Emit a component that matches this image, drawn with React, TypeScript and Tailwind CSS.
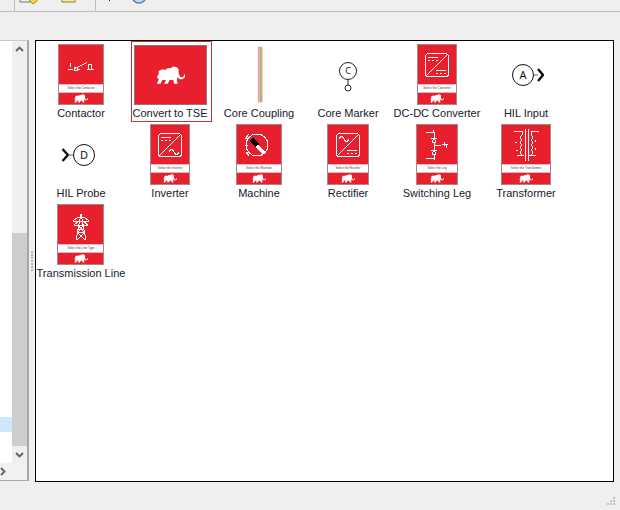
import type { ReactNode } from "react";

function Elephant({ w = 16, h = 10 }: { w?: number; h?: number }) {
  return (
    <svg width={w} height={h} viewBox="0 0 32 20" fill="white">
      <path d="M1 19 L3 14 L1 12 L3 8 L3 5 L7 3 L10 4 L13 2 L16 2 L19 0 L23 1 L25 3 L25 8 L27 12 L30 12 L31 9 L32 9 L32 12 L29 14 L26 14 L24 12 L23 15 L24 19 L20 19 L19 15 L15 15 L13 19 L9 19 L11 15 L7 15 L5 19 Z" />
    </svg>
  );
}

function Switch() {
  return (
    <svg width="46" height="40" viewBox="0 0 46 40" fill="none" stroke="white" strokeWidth="1" shapeRendering="crispEdges">
      <path d="M9 24.5H15M20 24.5H22M17 23.5L29 17.5M12 18v4" />
      <circle cx="17.5" cy="24.5" r="1.8" />
      <path d="M29 24.5H37M31 24V19H34V24" />
    </svg>
  );
}

function Converter({ top, bottom }: { top: "dc" | "ac"; bottom: "dc" | "ac" }) {
  const dc = (x: number, y: number) => (
    <path d={`M${x} ${y}h10M${x} ${y + 3}h2M${x + 4} ${y + 3}h2M${x + 8} ${y + 3}h2`} />
  );
  const ac = (x: number, y: number) => <path d={`M${x} ${y + 2}q2.5 -5 5 0t5 0`} />;
  return (
    <svg width="26" height="26" viewBox="0 0 26 26" fill="none" stroke="white" strokeWidth="1" shapeRendering="crispEdges">
      <rect x="1.5" y="1.5" width="23" height="23" rx="3" />
      <path d="M2 24L24 2" />
      {top === "dc" ? dc(4, 5) : ac(4, 5)}
      {bottom === "dc" ? dc(12, 18) : ac(12, 18)}
    </svg>
  );
}

function MachineIcon() {
  return (
    <svg width="40" height="32" viewBox="3 0 40 32" fill="none" stroke="white" strokeWidth="1" shapeRendering="crispEdges">
      <circle cx="21" cy="16" r="11" />
      <path d="M13 9H10l3-4M12 16H9M13 23H10l3 4" />
      <path d="M17 9L23 15L20 18L14 12Z" fill="black" stroke="black" />
      <path d="M22 16L29 23L27 25L20 18Z" fill="white" />
    </svg>
  );
}

function LegIcon() {
  return (
    <svg width="34" height="36" viewBox="0 0 34 36" fill="none" stroke="white" strokeWidth="1" shapeRendering="crispEdges">
      <path d="M6 5H14V11M14 15V23M14 27V31H6M13 5V3M14 31V33" />
      <path d="M11 11H17M12 15H16M14 11L12 15M14 11L16 15M11 23H17M12 27H16M14 23L12 27M14 23L16 27" />
      <path d="M15 18H21M24 15V19M22 17H28M26 17V21" />
    </svg>
  );
}

function TransformerIcon() {
  return (
    <svg width="48" height="38" viewBox="0 0 48 38" fill="none" stroke="white" strokeWidth="1" shapeRendering="crispEdges">
      <path d="M23 3V35M26 3V35" />
      <path d="M12 5H20V9q-3 3 0 5q-3 3 0 5q-3 3 0 5q-3 3 0 5H15" />
      <path d="M37 5H29V9q3 3 0 5q3 3 0 5q3 3 0 5q3 3 0 5H34" />
      <path d="M13 16h2M14 24h2M33 14v2M33 22v2" />
    </svg>
  );
}

function TowerIcon() {
  return (
    <svg width="18" height="27" viewBox="0 0 18 27" fill="none" stroke="white" strokeWidth="1" shapeRendering="crispEdges" className="mt-[5px]">
      <path d="M9 0L4 26M9 0L14 26M1 7H17M1 7L6 3H12L17 7M2 11H16M2 11L6 8M16 11L12 8M6 11L12 18H6L12 11M5 18L13 26M13 18L5 26" />
    </svg>
  );
}

function Card({ w, caption, children }: { w: number; caption: string; children: ReactNode }) {
  return (
    <div style={{ width: w }} className="h-[61px] shrink-0 bg-[#e81f2d] border border-[#a08a8c] flex flex-col">
      <div className="h-[39px] flex items-center justify-center overflow-hidden">{children}</div>
      <div className="h-[9px] bg-white border-y border-[#f0b8bc] flex items-center justify-center">
        <span className="text-[3px] leading-none text-[#444] whitespace-nowrap">{caption}</span>
      </div>
      <div className="flex-1 flex items-center justify-center">
        <Elephant w={14} h={9} />
      </div>
    </div>
  );
}

function Symbol({ children }: { children: ReactNode }) {
  return <div className="h-[61px] flex items-center justify-center">{children}</div>;
}

const items: { label: string; icon: ReactNode; selected?: boolean }[] = [
  {
    label: "Contactor",
    icon: (
      <Card w={46} caption="Select the Contactor">
        <Switch />
      </Card>
    ),
  },
  {
    label: "Convert to TSE",
    selected: true,
    icon: (
      <div className="w-[73px] h-[61px] bg-[#e81f2d] border border-[#8a7a7c] flex items-center justify-center">
        <Elephant w={29} h={19} />
      </div>
    ),
  },
  {
    label: "Core Coupling",
    icon: (
      <Symbol>
        <svg width="8" height="61" viewBox="0 0 8 61">
          <rect x="2" y="2" width="6" height="57" fill="#eeeeee" />
          <rect x="3" y="3" width="1.6" height="55" fill="#f29a9a" />
          <rect x="5" y="3" width="1" height="55" fill="#6fc36f" />
          <rect x="6.3" y="3" width="1" height="55" fill="#e58a5a" />
        </svg>
      </Symbol>
    ),
  },
  {
    label: "Core Marker",
    icon: (
      <Symbol>
        <svg width="20" height="34" viewBox="0 0 20 34" fill="none" stroke="#222" className="mt-[9px]">
          <circle cx="10" cy="9" r="8.5" />
          <path d="M10 17.5V23" />
          <circle cx="10" cy="26" r="3" />
          <text x="10" y="12" textAnchor="middle" fontSize="9" fill="#222" stroke="none" fontFamily="Noto Sans, sans-serif">
            C
          </text>
        </svg>
      </Symbol>
    ),
  },
  {
    label: "DC-DC Converter",
    icon: (
      <Card w={40} caption="Select the Converter">
        <Converter top="dc" bottom="dc" />
      </Card>
    ),
  },
  {
    label: "HIL Input",
    icon: (
      <Symbol>
        <svg width="36" height="24" viewBox="0 0 36 24" fill="none" stroke="#111">
          <circle cx="15" cy="12" r="10.5" />
          <path d="M26 12H30" stroke="#666" />
          <path d="M30 6L35 12L30 18" strokeWidth="2.4" />
          <text x="15" y="16" textAnchor="middle" fontSize="11" fill="#111" stroke="none" fontFamily="Noto Sans, sans-serif">
            A
          </text>
        </svg>
      </Symbol>
    ),
  },
  {
    label: "HIL Probe",
    icon: (
      <Symbol>
        <svg width="40" height="24" viewBox="0 0 40 24" fill="none" stroke="#111">
          <path d="M1.5 6L7 12L1.5 18" strokeWidth="2.4" />
          <path d="M7 12H12" stroke="#666" />
          <circle cx="23" cy="12" r="10.5" />
          <text x="23" y="16" textAnchor="middle" fontSize="11" fill="#111" stroke="none" fontFamily="Noto Sans, sans-serif">
            D
          </text>
        </svg>
      </Symbol>
    ),
  },
  {
    label: "Inverter",
    icon: (
      <Card w={40} caption="Select the Inverter">
        <Converter top="dc" bottom="ac" />
      </Card>
    ),
  },
  {
    label: "Machine",
    icon: (
      <Card w={46} caption="Select the Machine">
        <MachineIcon />
      </Card>
    ),
  },
  {
    label: "Rectifier",
    icon: (
      <Card w={42} caption="Select the Rectifier">
        <Converter top="ac" bottom="dc" />
      </Card>
    ),
  },
  {
    label: "Switching Leg",
    icon: (
      <Card w={42} caption="Select the Leg">
        <LegIcon />
      </Card>
    ),
  },
  {
    label: "Transformer",
    icon: (
      <Card w={50} caption="Select the Transformer">
        <TransformerIcon />
      </Card>
    ),
  },
  {
    label: "Transmission Line",
    icon: (
      <Card w={47} caption="Select the Line Type">
        <TowerIcon />
      </Card>
    ),
  },
];

function Toolbar() {
  return (
    <div className="h-[12px] shrink-0 border-b border-[#bdbdbd] flex overflow-hidden">
      <div className="w-[15px] border-r border-[#bdbdbd]" />
      <div className="w-[81px] border-r border-[#bdbdbd] relative">
        <svg width="80" height="11" viewBox="0 0 80 11" className="block">
          <rect x="5" y="-8" width="10" height="10" fill="#eeeeee" stroke="#777" />
          <path d="M15 -4H22V1L18 4L15 1Z" fill="#f5d24a" stroke="#b08a20" />
          <rect x="47" y="-8" width="13" height="10" fill="#fbe89a" stroke="#8a7a3a" />
        </svg>
      </div>
      <svg width="60" height="11" viewBox="0 0 60 11" className="block">
        <rect x="13" y="0" width="1" height="1" fill="#222" />
        <circle cx="43" cy="-4" r="7" fill="#c6d6ea" stroke="#5b7da8" strokeWidth="1.4" />
      </svg>
    </div>
  );
}

function LeftPanel() {
  return (
    <div className="w-[29px] h-[441px] shrink-0 bg-white border-t border-r-2 border-b border-t-[#c8c8c8] border-r-[#a3a6b4] border-b-[#a3a6b4] flex flex-col">
      <div className="flex-1 flex min-h-0">
        <div className="w-[12px] flex flex-col justify-end pb-[31px]">
          <div className="h-[15px] bg-[#cce8ff]" />
        </div>
        <div className="w-[15px] bg-[#efefef] flex flex-col items-center">
          <svg width="9" height="6" viewBox="0 0 9 6" className="mt-[5px] shrink-0" fill="none" stroke="#606060" strokeWidth="1.8">
            <path d="M1 5L4.5 1.5L8 5" />
          </svg>
          <div className="mt-[181px] w-full h-[213px] bg-[#cdcdcd]" />
          <svg width="9" height="6" viewBox="0 0 9 6" className="mt-[6px] shrink-0" fill="none" stroke="#606060" strokeWidth="1.8">
            <path d="M1 1L4.5 4.5L8 1" />
          </svg>
        </div>
      </div>
      <div className="h-[17px] shrink-0 bg-[#f1f1f1] flex items-center">
        <svg width="6" height="9" viewBox="0 0 6 9" fill="none" stroke="#606060" strokeWidth="1.8">
          <path d="M1 1L4.5 4.5L1 8" />
        </svg>
      </div>
    </div>
  );
}

function SplitterDots() {
  return (
    <div className="w-[6px] shrink-0 flex flex-col items-center justify-center gap-[1px] h-[441px]">
      {[0, 1, 2, 3, 4, 5, 6].map((i) => (
        <div key={i} className="w-[2px] h-[2px] bg-[#b5b5b5]" />
      ))}
    </div>
  );
}

function ComponentGrid() {
  return (
    <div className="w-[579px] h-[442px] bg-white border border-black pl-[0.5px]">
      <div className="grid grid-cols-[repeat(6,89px)] auto-rows-[80px]">
        {items.map((item) => (
          <div key={item.label} className="flex justify-center">
            <div
              className={
                item.selected
                  ? "w-[81px] h-[81px] ml-[2px] pr-[2px] border border-[#c8323c] flex flex-col items-center pt-[3px]"
                  : "flex flex-col items-center pt-[3px]"
              }
            >
              {item.icon}
              <div className="h-[16px] text-[11px] leading-[16px] text-[#16202c] whitespace-nowrap">{item.label}</div>
            </div>
          </div>
        ))}
      </div>
    </div>
  );
}

export default function App() {
  return (
    <div className="w-[620px] h-[510px] bg-[#efefef] flex flex-col overflow-hidden font-['Liberation_Sans',sans-serif]">
      <Toolbar />
      <div className="flex pt-[28px]">
        <LeftPanel />
        <SplitterDots />
        <ComponentGrid />
      </div>
      <div className="flex-1 flex justify-end items-end pr-[3px] pb-[3px]">
        <svg width="11" height="11" viewBox="0 0 11 11" fill="#c2c2c2">
          <rect x="7" y="1" width="2" height="2" />
          <rect x="4" y="4" width="2" height="2" />
          <rect x="7" y="4" width="2" height="2" />
          <rect x="1" y="7" width="2" height="2" />
          <rect x="4" y="7" width="2" height="2" />
          <rect x="7" y="7" width="2" height="2" />
        </svg>
      </div>
    </div>
  );
}
